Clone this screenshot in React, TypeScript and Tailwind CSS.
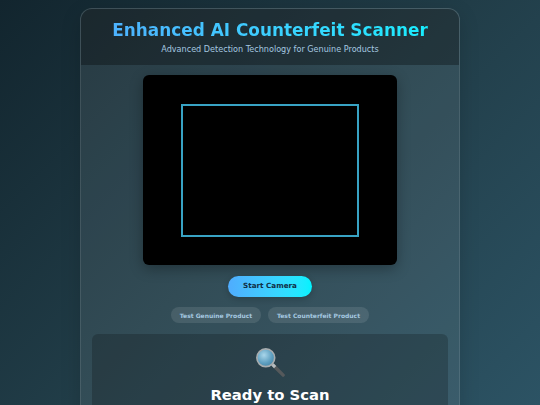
const FONT = "font-['DejaVu_Sans',Verdana,sans-serif]"

function MagnifierIcon() {
  return (
    <svg viewBox="0 0 32 32" className="h-[30px] w-[30px]" aria-hidden>
      <defs>
        <radialGradient id="lens" cx="0.4" cy="0.35" r="0.75">
          <stop offset="0" stopColor="#a9d6ea" />
          <stop offset="0.6" stopColor="#5e9fc0" />
          <stop offset="1" stopColor="#3f7f9f" />
        </radialGradient>
      </defs>
      <path d="M19.5 19.5 L30 30" stroke="#55595b" strokeWidth="3.6" strokeLinecap="round" />
      <path d="M18.5 18.5 L21.5 21.5" stroke="#b5bcbf" strokeWidth="3.4" />
      <circle cx="11.5" cy="11.5" r="9.5" fill="url(#lens)" stroke="#a8adaf" strokeWidth="1.8" />
    </svg>
  )
}

export default function App() {
  return (
    <div className={`${FONT} flex h-[405px] justify-center overflow-hidden bg-[linear-gradient(135deg,#12252e,#213d48,#2c5364)] pt-2 text-white`}>
      <div className="h-fit w-[380px] shrink-0 overflow-hidden rounded-[12px] border border-white/10 bg-white/[0.08] shadow-[0_6px_20px_rgba(0,0,0,0.15)]">
        <header className="h-[56px] bg-black/30 pt-[9px] text-center">
          <h1 className="bg-linear-to-r from-[#4facfe] to-[#00f2fe] bg-clip-text text-[16.9px] leading-[24px] font-bold text-transparent">
            <span className="inline-block w-full">Enhanced AI Counterfeit Scanner</span>
          </h1>
          <p className="mt-[2px] text-[8.1px] leading-[10px] text-[#a5c8e0]">
            Advanced Detection Technology for Genuine Products
          </p>
        </header>

        <main className="flex flex-col items-center px-[11px] pt-[10px]">
          <div className="flex h-[190px] w-[254px] items-center justify-center rounded-[6px] bg-black shadow-[0_4px_14px_rgba(0,0,0,0.3)]">
            <div className="h-[133px] w-[178px] border-2 border-[#38a3c4]" />
          </div>

          <button className="mt-[11px] h-[21px] w-[84px] rounded-full bg-linear-to-r from-[#4facfe] to-[#00f2fe] text-[7.2px] font-bold text-[#0f2f47] shadow-[0_2px_6px_rgba(0,0,0,0.2)]">
            Start Camera
          </button>

          <div className="mt-[10px] flex gap-[7px]">
            <button className="h-[16px] w-[90px] rounded-full bg-white/10 text-[6px] font-bold text-[#a5c8e0]">
              Test Genuine Product
            </button>
            <button className="h-[16px] w-[101px] rounded-full bg-white/10 text-[6px] font-bold text-[#a5c8e0]">
              Test Counterfeit Product
            </button>
          </div>

          <section className="mt-[11px] flex h-[100px] w-full flex-col items-center rounded-[6px] bg-black/20 pt-[13px]">
            <MagnifierIcon />
            <h2 className="mt-[7px] text-[14.8px] leading-[22px] font-bold text-white">Ready to Scan</h2>
          </section>
        </main>
      </div>
    </div>
  )
}
